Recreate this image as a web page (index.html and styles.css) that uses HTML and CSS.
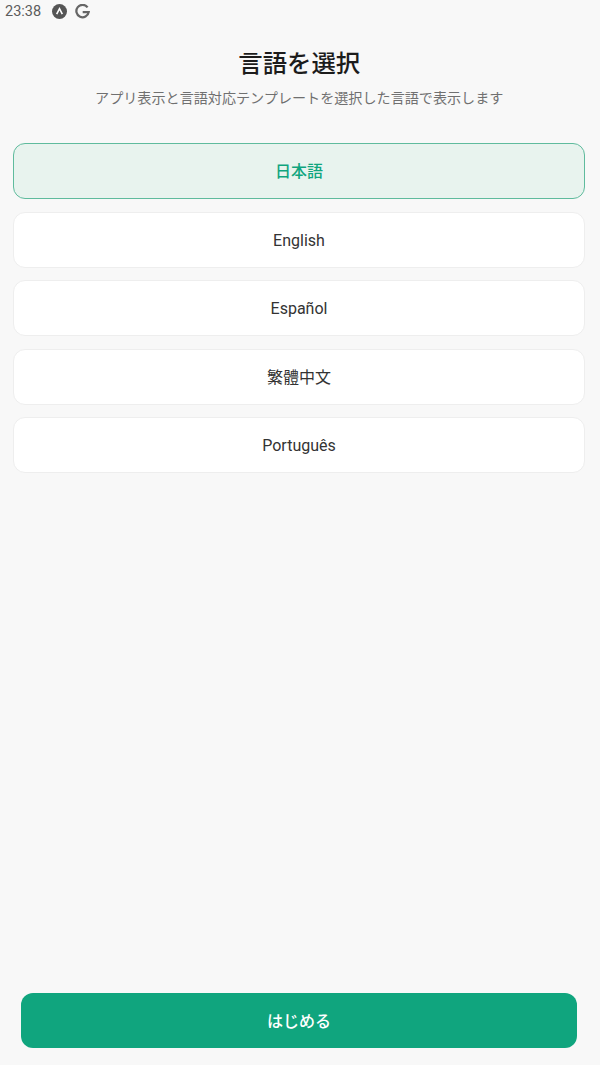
FILE: index.html
```html
<!DOCTYPE html>
<html lang="ja">
<head>
<meta charset="utf-8">
<title>言語を選択</title>
<link rel="stylesheet" href="styles.css">
</head>
<body>
<div class="screen">
  <div class="status">
    <span class="time">23:38</span>
    <svg class="ic" viewBox="0 0 16 16"><circle cx="8" cy="8" r="8" fill="#555"/><path d="M5 10.8 8 5l3 5.8" fill="none" stroke="#fff" stroke-width="1.7"/></svg>
    <svg class="ic" viewBox="0 0 16 16"><path d="M13.4 3.6A6.6 6.6 0 1 0 14.6 8.6H8.2" fill="none" stroke="#666" stroke-width="2.4"/></svg>
  </div>
  <header class="head">
    <h1 class="title">言語を選択</h1>
    <p class="sub">アプリ表示と言語対応テンプレートを選択した言語で表示します</p>
  </header>
  <div class="list">
    <div class="opt sel cjk">日本語</div>
    <div class="opt">English</div>
    <div class="opt">Español</div>
    <div class="opt cjk">繁體中文</div>
    <div class="opt">Português</div>
  </div>
  <div class="foot"><div class="btn cjk">はじめる</div></div>
</div>
</body>
</html>
```
FILE: styles.css
```css
* { box-sizing: border-box; }
html, body { margin: 0; height: 100%; }
body { background: #f8f8f8; font-family: Roboto, "Noto Sans CJK JP", sans-serif; }
.screen { height: 1065px; display: flex; flex-direction: column; overflow: hidden; }
.status { height: 22px; padding: 0 0 0 5px; display: flex; align-items: center; gap: 8px; color: #5c5c5c; font-size: 14.5px; }
.time { margin-right: 3px; }
.ic { width: 15px; height: 15px; }
.head { margin-top: 24px; padding-right: 1.5px; text-align: center; }
.title { margin: 0; font-size: 24.4px; line-height: 36px; font-weight: 500; color: #1c1c1c; }
.sub { margin: 6px 0 0; font-size: 14.1px; line-height: 20px; color: #707070; }
.list { margin-top: 35px; padding: 0 15px 0 13px; display: flex; flex-direction: column; gap: 12.5px; }
.opt { height: 56px; padding-top: 1px; border: 1px solid #eeeeee; border-radius: 12px; background: #fff; display: flex; align-items: center; justify-content: center; font-size: 16px; color: #333; }
.opt.cjk { padding-top: 0; padding-bottom: 2px; }
.sel { background: #e8f3ee; border-color: #5fbb9d; color: #10a57e; font-weight: 500; }
.foot { margin-top: auto; padding: 0 23px 17px 21px; }
.btn { height: 55px; padding-bottom: 2px; border-radius: 12px; background: #10a57e; color: #fff; font-size: 16px; font-weight: 500; display: flex; align-items: center; justify-content: center; }
```
